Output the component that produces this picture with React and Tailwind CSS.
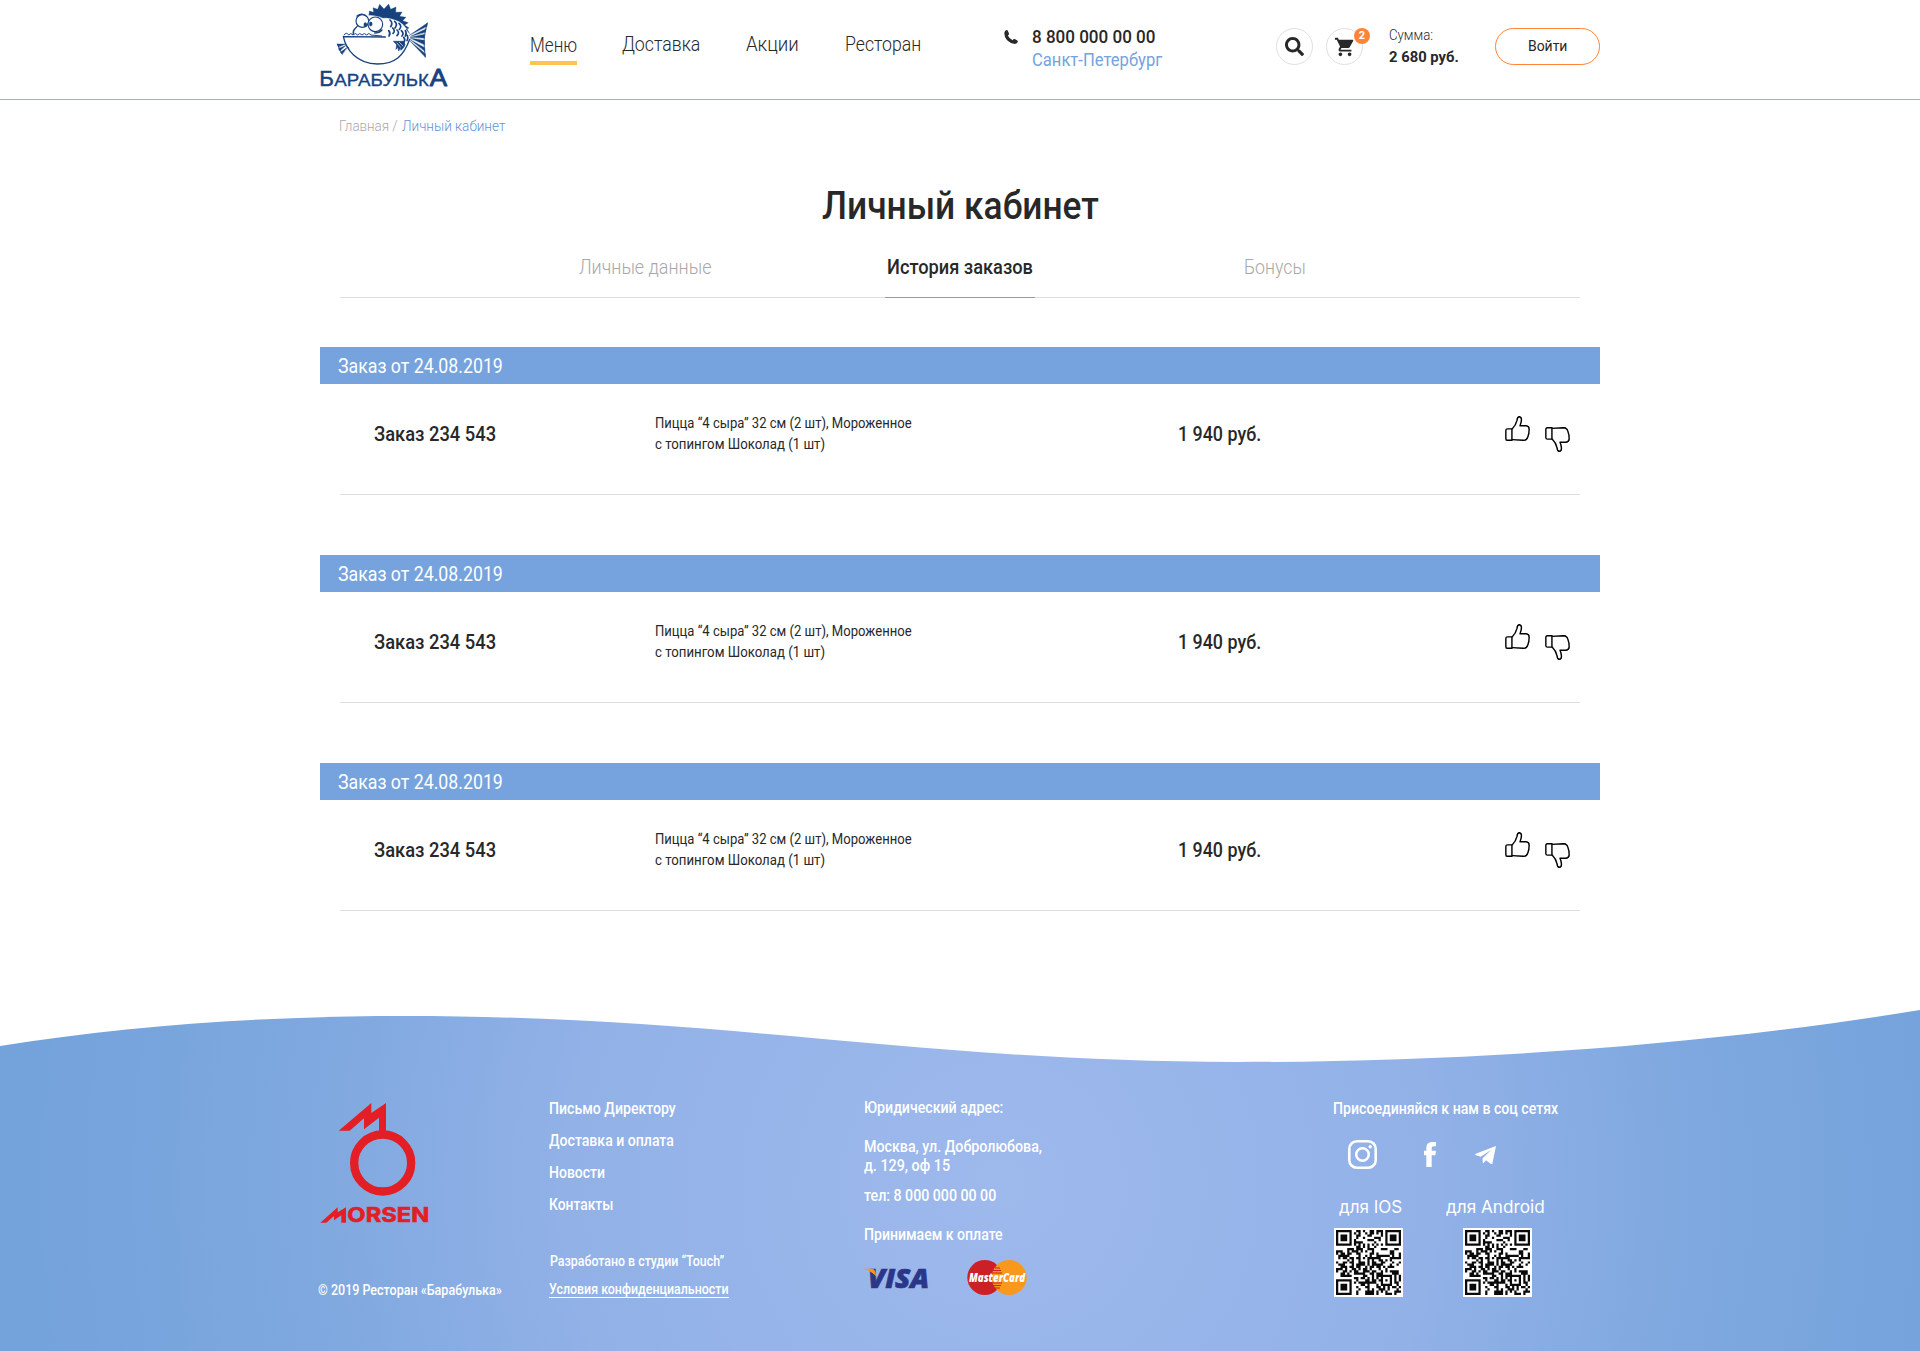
import { useLayoutEffect, useRef, useState } from "react";
import { FaSearch } from "react-icons/fa";
import { MdShoppingCart } from "react-icons/md";

// A single line of text condensed horizontally to the given width.
function Line({ w, className = "", children }) {
  const ref = useRef(null);
  const [scale, setScale] = useState(1);
  useLayoutEffect(() => {
    setScale(w / ref.current.offsetWidth);
  }, [w, children]);
  return (
    <span className={`block shrink-0 whitespace-nowrap ${className}`} style={{ width: w }}>
      <span ref={ref} className="inline-block origin-left" style={{ transform: `scaleX(${scale})` }}>
        {children}
      </span>
    </span>
  );
}

function FishLogo() {
  return (
    <svg viewBox="60 0 390 270" className="h-[90px] w-[130px] shrink-0 overflow-visible" fill="none" stroke="#17427f" strokeLinecap="round" strokeLinejoin="round">
      <path fill="#17427f" strokeWidth="1" d="M207 45 L208 33 L221 37 L219 23 L233 28 L239 13 L252 27 L266 12 L272 28 L288 21 L287 37 L306 36 L299 49 L318 52 L308 62 L325 68 L314 75 L327 84 L318 88 L329 101 Q312 66 285 59 Q262 51 249 54 Q232 46 207 45Z" />
      <path strokeWidth="4" d="M132 110 L256 111 M130 110 C138 148 170 192 232 192 C286 192 312 166 329 118" />
      <path strokeWidth="3" d="M132 105 q7 -11 14 0 q6 -9 13 0 q7 -9 14 0 q6 -9 13 0 q7 -9 14 0 q6 -9 13 0 l32 3" />
      <circle cx="187" cy="63" r="19" fill="#fff" strokeWidth="3.5" />
      <circle cx="226" cy="73" r="22" fill="#fff" strokeWidth="3.5" />
      <ellipse cx="196" cy="74" rx="4.5" ry="6.5" fill="#17427f" strokeWidth="1" />
      <ellipse cx="212" cy="72" rx="4.5" ry="6.5" fill="#17427f" strokeWidth="1" />
      <path strokeWidth="4" d="M172 78 C166 88 157 88 160 102 M171 48 q14 -11 26 -1 M246 90 q-8 9 -22 9" />
      <path strokeWidth="5" d="M270 60 q10 9 2 20 M284 64 q10 9 1 20 M297 70 q10 9 1 18 M278 84 q9 9 1 16 M291 90 q9 8 0 17 M304 92 q9 8 2 16 M266 92 q7 8 1 16 M316 92 q5 8 0 16 M311 112 q6 6 1 14 M322 106 q4 8 -1 16" />
      <path fill="#17427f" strokeWidth="2" d="M281 124 L311 124 Q318 134 312 141 L303 151 L301 143 L296 153 L294 142 L288 148 L290 135Z" />
      <path stroke="#fff" strokeWidth="2" d="M291 129 L302 142 M298 127 L309 138" />
      <path fill="#17427f" strokeWidth="1" d="M328 106 L382 69 L381 79 Z M332 109 L379 86 L376 97 Z M331 112 L374 103 L373 114 Z M332 115 L373 121 L374 134 Z M331 119 L374 143 L375 154 Z M329 122 L376 161 L376 171 Z" />
      <path strokeWidth="2.5" d="M382 69 Q366 116 376 171" />
      <path fill="#17427f" strokeWidth="1" d="M136 132 L112 132 L115 141 Z M138 136 L115 146 L119 153 Z M142 142 L121 157 L127 162 Z" />
      <path strokeWidth="3" d="M112 132 L126 162 M136 132 L146 144" />
      <g fill="#17427f" stroke="#17427f" fontFamily="'Liberation Sans', Arial, sans-serif">
        <text x="58" y="258" fontSize="68" textLength="44" lengthAdjust="spacingAndGlyphs" strokeWidth="1.5">Б</text>
        <text x="103" y="258" fontSize="48" textLength="284" lengthAdjust="spacingAndGlyphs" strokeWidth="1">АРАБУЛЬК</text>
        <text x="389" y="258" fontSize="70" textLength="52" lengthAdjust="spacingAndGlyphs" strokeWidth="2.5">А</text>
      </g>
    </svg>
  );
}

function Header() {
  return (
    <header className="h-[100px] border-b border-[#8fb3e2]">
      <div className="mx-auto flex w-[1280px] items-start text-[#282828]">
        <FishLogo />
        <nav className="ml-20 flex pt-8 text-xl leading-6 font-light">
          <div className="mt-px">
            <Line w={47}>Меню</Line>
            <div className="mt-1 h-1 w-[47px] bg-[#ffc44f]" />
          </div>
          <Line w={78} className="ml-[45px]">Доставка</Line>
          <Line w={53} className="ml-[46px]">Акции</Line>
          <Line w={76} className="ml-[46px]">Ресторан</Line>
        </nav>
        <svg viewBox="0 0 14 14" className="mt-[30px] ml-[83px] h-[14px] w-[14px]" fill="#282828">
          <path d="M0.4 2.2 Q1.2 0.2 3 0.1 Q3.6 0.2 3.9 1 L5 3.6 Q5.2 4.4 4.6 4.9 L3.8 5.6 Q5.2 8.7 8.6 10.2 L9.4 9.3 Q10 8.8 10.7 9.1 L13.3 10.5 Q14 11 13.8 11.6 Q13.1 13.9 10.9 14 Q6.8 13.8 3.4 10.5 Q0 6.6 0.4 2.2Z" />
        </svg>
        <div className="ml-[14px] pt-[25px] text-lg leading-[23px]">
          <Line w={123} className="font-medium">8 800 000 00 00</Line>
          <Line w={130} className="text-[#76a3dd]">Санкт-Петербург</Line>
        </div>
        <div className="mt-7 ml-[114px] flex h-[37px] w-[37px] items-center justify-center rounded-full border border-[#dfdfdf]">
          <FaSearch className="h-[19px] w-[19px]" />
        </div>
        <div className="relative mt-7 ml-[13px] flex h-[37px] w-[37px] items-center justify-center rounded-full border border-[#dfdfdf]">
          <MdShoppingCart className="h-[22px] w-[22px]" />
          <span className="absolute -top-px left-[27px] flex h-4 w-4 items-center justify-center rounded-full bg-[#ff8437] text-[11px] font-bold text-white">2</span>
        </div>
        <div className="ml-[26px] pt-6 text-[15px] leading-[22px]">
          <Line w={44} className="font-light">Сумма:</Line>
          <Line w={70} className="font-bold">2 680 руб.</Line>
        </div>
        <button className="mt-7 ml-9 flex h-[37px] w-[105px] items-center justify-center rounded-full border border-[#ff8437] pb-px text-[15px] leading-5">
          <Line w={39}>Войти</Line>
        </button>
      </div>
    </header>
  );
}

function Thumb({ down }) {
  return (
    <svg viewBox="0 0 73 74" className={down ? "mt-[43px] ml-[15px] h-[25px] w-[25px] -scale-y-100" : "mt-8 ml-[244px] h-[25px] w-[25px]"} fill="none" stroke="#000" strokeWidth="4.2" strokeLinejoin="round">
      <path d="M20 38 H7 Q2 38 2 43 V67 Q2 72 7 72 H20 Z" />
      <path d="M20 39 Q32 27 35 13 Q36 2 42 2 Q49 3 48 13 Q47 22 44 29 H62 Q71 30 71 39 Q71 52 67 62 Q64 72 54 72 L20 70" />
    </svg>
  );
}

function Order() {
  return (
    <section className="text-[#282828]">
      <div className="flex h-[37px] items-center bg-[#76a3dd] pl-[18px] text-xl leading-6 text-white">
        <Line w={165}>Заказ от 24.08.2019</Line>
      </div>
      <div className="mx-5 flex h-[111px] items-start border-b border-[#dedede]">
        <Line w={122} className="mt-[38px] ml-[34px] text-xl leading-6 font-medium">Заказ 234 543</Line>
        <div className="mt-[29px] ml-[159px] text-[15px] leading-[21px]">
          <Line w={257}>Пицца “4 сыра” 32 см (2 шт), Мороженное</Line>
          <Line w={170}>с топингом Шоколад (1 шт)</Line>
        </div>
        <Line w={83} className="mt-[38px] ml-[266px] text-xl leading-6 font-medium">1 940 руб.</Line>
        <Thumb />
        <Thumb down />
      </div>
    </section>
  );
}

function Morsen() {
  return (
    <svg viewBox="60 36 330 366" className="h-[122px] w-[110px] overflow-visible" fill="#e31e24">
      <path d="M116 122 L214 39 V69 L258 39 V124 H237 V83 L192 118 V85 L149 122 Z" />
      <circle cx="248" cy="219" r="85.5" fill="none" stroke="#e31e24" strokeWidth="25" />
      <path d="M61 398 L113 352 V367 L138 352 V398 H124 V376 L102 391 V378 L79 398 Z" />
      <text x="142" y="397" fontFamily="Inter, sans-serif" fontSize="62" fontWeight="700" stroke="#e31e24" strokeWidth="2" textLength="246" lengthAdjust="spacingAndGlyphs">ORSEN</text>
    </svg>
  );
}

function Visa() {
  return (
    <svg viewBox="0 0 66 22" className="h-[22px] w-[66px] overflow-visible">
      <text x="4" y="21" fontFamily="'Open Sans', sans-serif" fontWeight="800" fontStyle="italic" fontSize="27" fill="#2b3689" stroke="#2b3689" strokeWidth="0.7" textLength="61" lengthAdjust="spacingAndGlyphs">VISA</text>
      <path fill="#f7981d" d="M-1.5 1.8 H8 Q10.5 1.8 11.2 4.5 L12.5 10 Q8 4 -1.5 1.8Z" />
    </svg>
  );
}

function MasterCard() {
  return (
    <svg viewBox="0 0 60 35" className="ml-[37px] h-[35px] w-[60px] overflow-visible">
      <circle cx="17.8" cy="17.5" r="17.5" fill="#cc2027" />
      <circle cx="42.2" cy="17.5" r="17.5" fill="#f8991d" />
      <path stroke="#cc2027" strokeWidth="1.1" d="M28 8 H33 M26 10.5 H34 M25 13 H35 M25 23 H35 M26 25.5 H34 M27 28 H33" />
      <text x="2" y="22" fontFamily="'Open Sans', sans-serif" fontWeight="800" fontStyle="italic" fontSize="13" fill="#fff" textLength="56" lengthAdjust="spacingAndGlyphs">MasterCard</text>
    </svg>
  );
}

const QR_SIZE = 29;

// Finder and alignment squares plus a fixed pseudo-random data field.
function buildQr() {
  let seed = 20190824;
  const near = (x, y, cx, cy) => Math.max(Math.abs(x - cx), Math.abs(y - cy));
  let d = "";
  for (let y = 0; y < QR_SIZE; y++) {
    for (let x = 0; x < QR_SIZE; x++) {
      seed = (seed * 1103515245 + 12345) % 2147483648;
      let on = (seed >> 16) % 100 < 52;
      const finder = Math.min(near(x, y, 3, 3), near(x, y, 25, 3), near(x, y, 3, 25));
      if (finder <= 4) on = finder !== 2 && finder !== 4;
      else if (near(x, y, 22, 22) <= 2) on = near(x, y, 22, 22) !== 1;
      else if (x === 6 || y === 6) on = (x + y) % 2 === 0;
      if (on) d += `M${x} ${y}h1v1h-1z`;
    }
  }
  return d;
}

const QR_PATH = buildQr();

function Qr({ className }) {
  return (
    <svg viewBox="-0.9 -0.9 30.8 30.8" className={`h-[69px] w-[69px] bg-white ${className}`}>
      <path d={QR_PATH} fill="#0a0a0a" />
    </svg>
  );
}

function Footer() {
  return (
    <footer className="relative mt-[94px] h-[346px] overflow-hidden text-white">
      <svg viewBox="0 0 1920 346" className="absolute inset-0 h-full w-full">
        <defs>
          <radialGradient id="sea" gradientUnits="userSpaceOnUse" cx="1000" cy="180" r="970">
            <stop offset="0" stopColor="#9eb9ec" />
            <stop offset="0.45" stopColor="#91b1e7" />
            <stop offset="0.72" stopColor="#7ea8df" />
            <stop offset="1" stopColor="#74a2db" />
          </radialGradient>
        </defs>
        <path fill="url(#sea)" d="M0 41 C130 20 270 11 404 11 C730 11 920 57 1237 57 C1480 57 1720 38 1920 5 V346 H0 Z" />
      </svg>
      <div className="relative mx-auto flex w-[1284px] items-start pt-[93px] text-base leading-5 font-medium">
        <div className="w-[231px] pt-1">
          <div className="ml-0.5"><Morsen /></div>
          <Line w={184} className="mt-[57px] text-sm leading-[18px]">© 2019 Ресторан «Барабулька»</Line>
        </div>
        <div className="w-[315px] pt-px">
          <div className="flex flex-col gap-3">
            <Line w={127}>Письмо Директору</Line>
            <Line w={125}>Доставка и оплата</Line>
            <Line w={56}>Новости</Line>
            <Line w={64}>Контакты</Line>
          </div>
          <Line w={174} className="mt-[37px] ml-px text-sm leading-[18px]">Разработано в студии “Touch”</Line>
          <Line w={180} className="mt-[11px] border-b border-white text-sm leading-4">Условия конфиденциальности</Line>
        </div>
        <div className="w-[469px]">
          <Line w={139}>Юридический адрес:</Line>
          <Line w={178} className="mt-[19px]">Москва, ул. Добролюбова,</Line>
          <Line w={86} className="-mt-px">д. 129, оф 15</Line>
          <Line w={132} className="mt-[10px]">тел: 8 000 000 00 00</Line>
          <Line w={139} className="mt-[19px]">Принимаем к оплате</Line>
          <div className="mt-[15px] flex items-center">
            <Visa />
            <MasterCard />
          </div>
        </div>
        <div className="pt-px">
          <Line w={225}>Присоединяйся к нам в соц сетях</Line>
          <div className="mt-[21px] ml-[15px] flex h-[29px] items-center">
            <svg viewBox="0 0 29 29" className="h-[29px] w-[29px]" fill="none" stroke="#fff" strokeWidth="2.6">
              <rect x="1.3" y="1.3" width="26.4" height="26.4" rx="7.5" />
              <circle cx="14.5" cy="14.5" r="6.3" />
              <circle cx="22.2" cy="6.8" r="1.7" fill="#fff" stroke="none" />
            </svg>
            <svg viewBox="0 0 36 75" className="ml-[47px] h-[25px] w-3" fill="#fff">
              <path d="M7 75 V40 H0 V26 H7 V19 Q7 0 24 0 H36 V13 H29 Q23 13 23 19 V26 H36 L34 40 H23 V75 Z" />
            </svg>
            <svg viewBox="0 0 63 54" className="ml-[39px] h-[18px] w-[21px]" fill="#fff">
              <path d="M63 0 L52 53 Q51 56 47 53 L33 43 L26 51 Q24 53 23 49 L23 37 L49 11 L17 32 L1 27 Q-1 25 2 23 Z" />
            </svg>
          </div>
          <div className="mt-[26px] flex font-['Inter'] text-[17px] leading-6 font-normal">
            <Line w={63} className="ml-[6px]">для IOS</Line>
            <Line w={99} className="ml-11">для Android</Line>
          </div>
          <div className="mt-[9px] flex">
            <Qr className="ml-px" />
            <Qr className="ml-[60px]" />
          </div>
        </div>
      </div>
    </footer>
  );
}

export default function App() {
  return (
    <div className="min-h-[1351px] w-[1920px] overflow-hidden bg-white font-['Roboto',sans-serif] text-[#282828]">
      <Header />
      <main className="mx-auto w-[1280px]">
        <div className="flex pt-4 pl-[19px] text-[15px] leading-5 font-light">
          <Line w={59} className="text-[#a8a8a8]">Главная /</Line>
          <Line w={103} className="ml-[3.5px] text-[#5f94da]">Личный кабинет</Line>
        </div>
        <h1 className="mt-12 flex justify-center text-[38px] leading-[44px] font-medium">
          <Line w={277}>Личный кабинет</Line>
        </h1>
        <div className="mx-5 mt-[27px] flex h-[43px] border-b border-[#dedede] text-xl leading-6">
          <Line w={132} className="ml-[239px] font-light text-[#a8a8a8]">Личные данные</Line>
          <div className="-mb-px ml-[174px] flex w-[150px] justify-center border-b border-[#76a3dd]">
            <Line w={146} className="font-medium">История заказов</Line>
          </div>
          <Line w={62} className="ml-[209px] font-light text-[#a8a8a8]">Бонусы</Line>
        </div>
        <div className="mt-[49px] flex flex-col gap-[60px]">
          <Order />
          <Order />
          <Order />
        </div>
      </main>
      <Footer />
    </div>
  );
}
